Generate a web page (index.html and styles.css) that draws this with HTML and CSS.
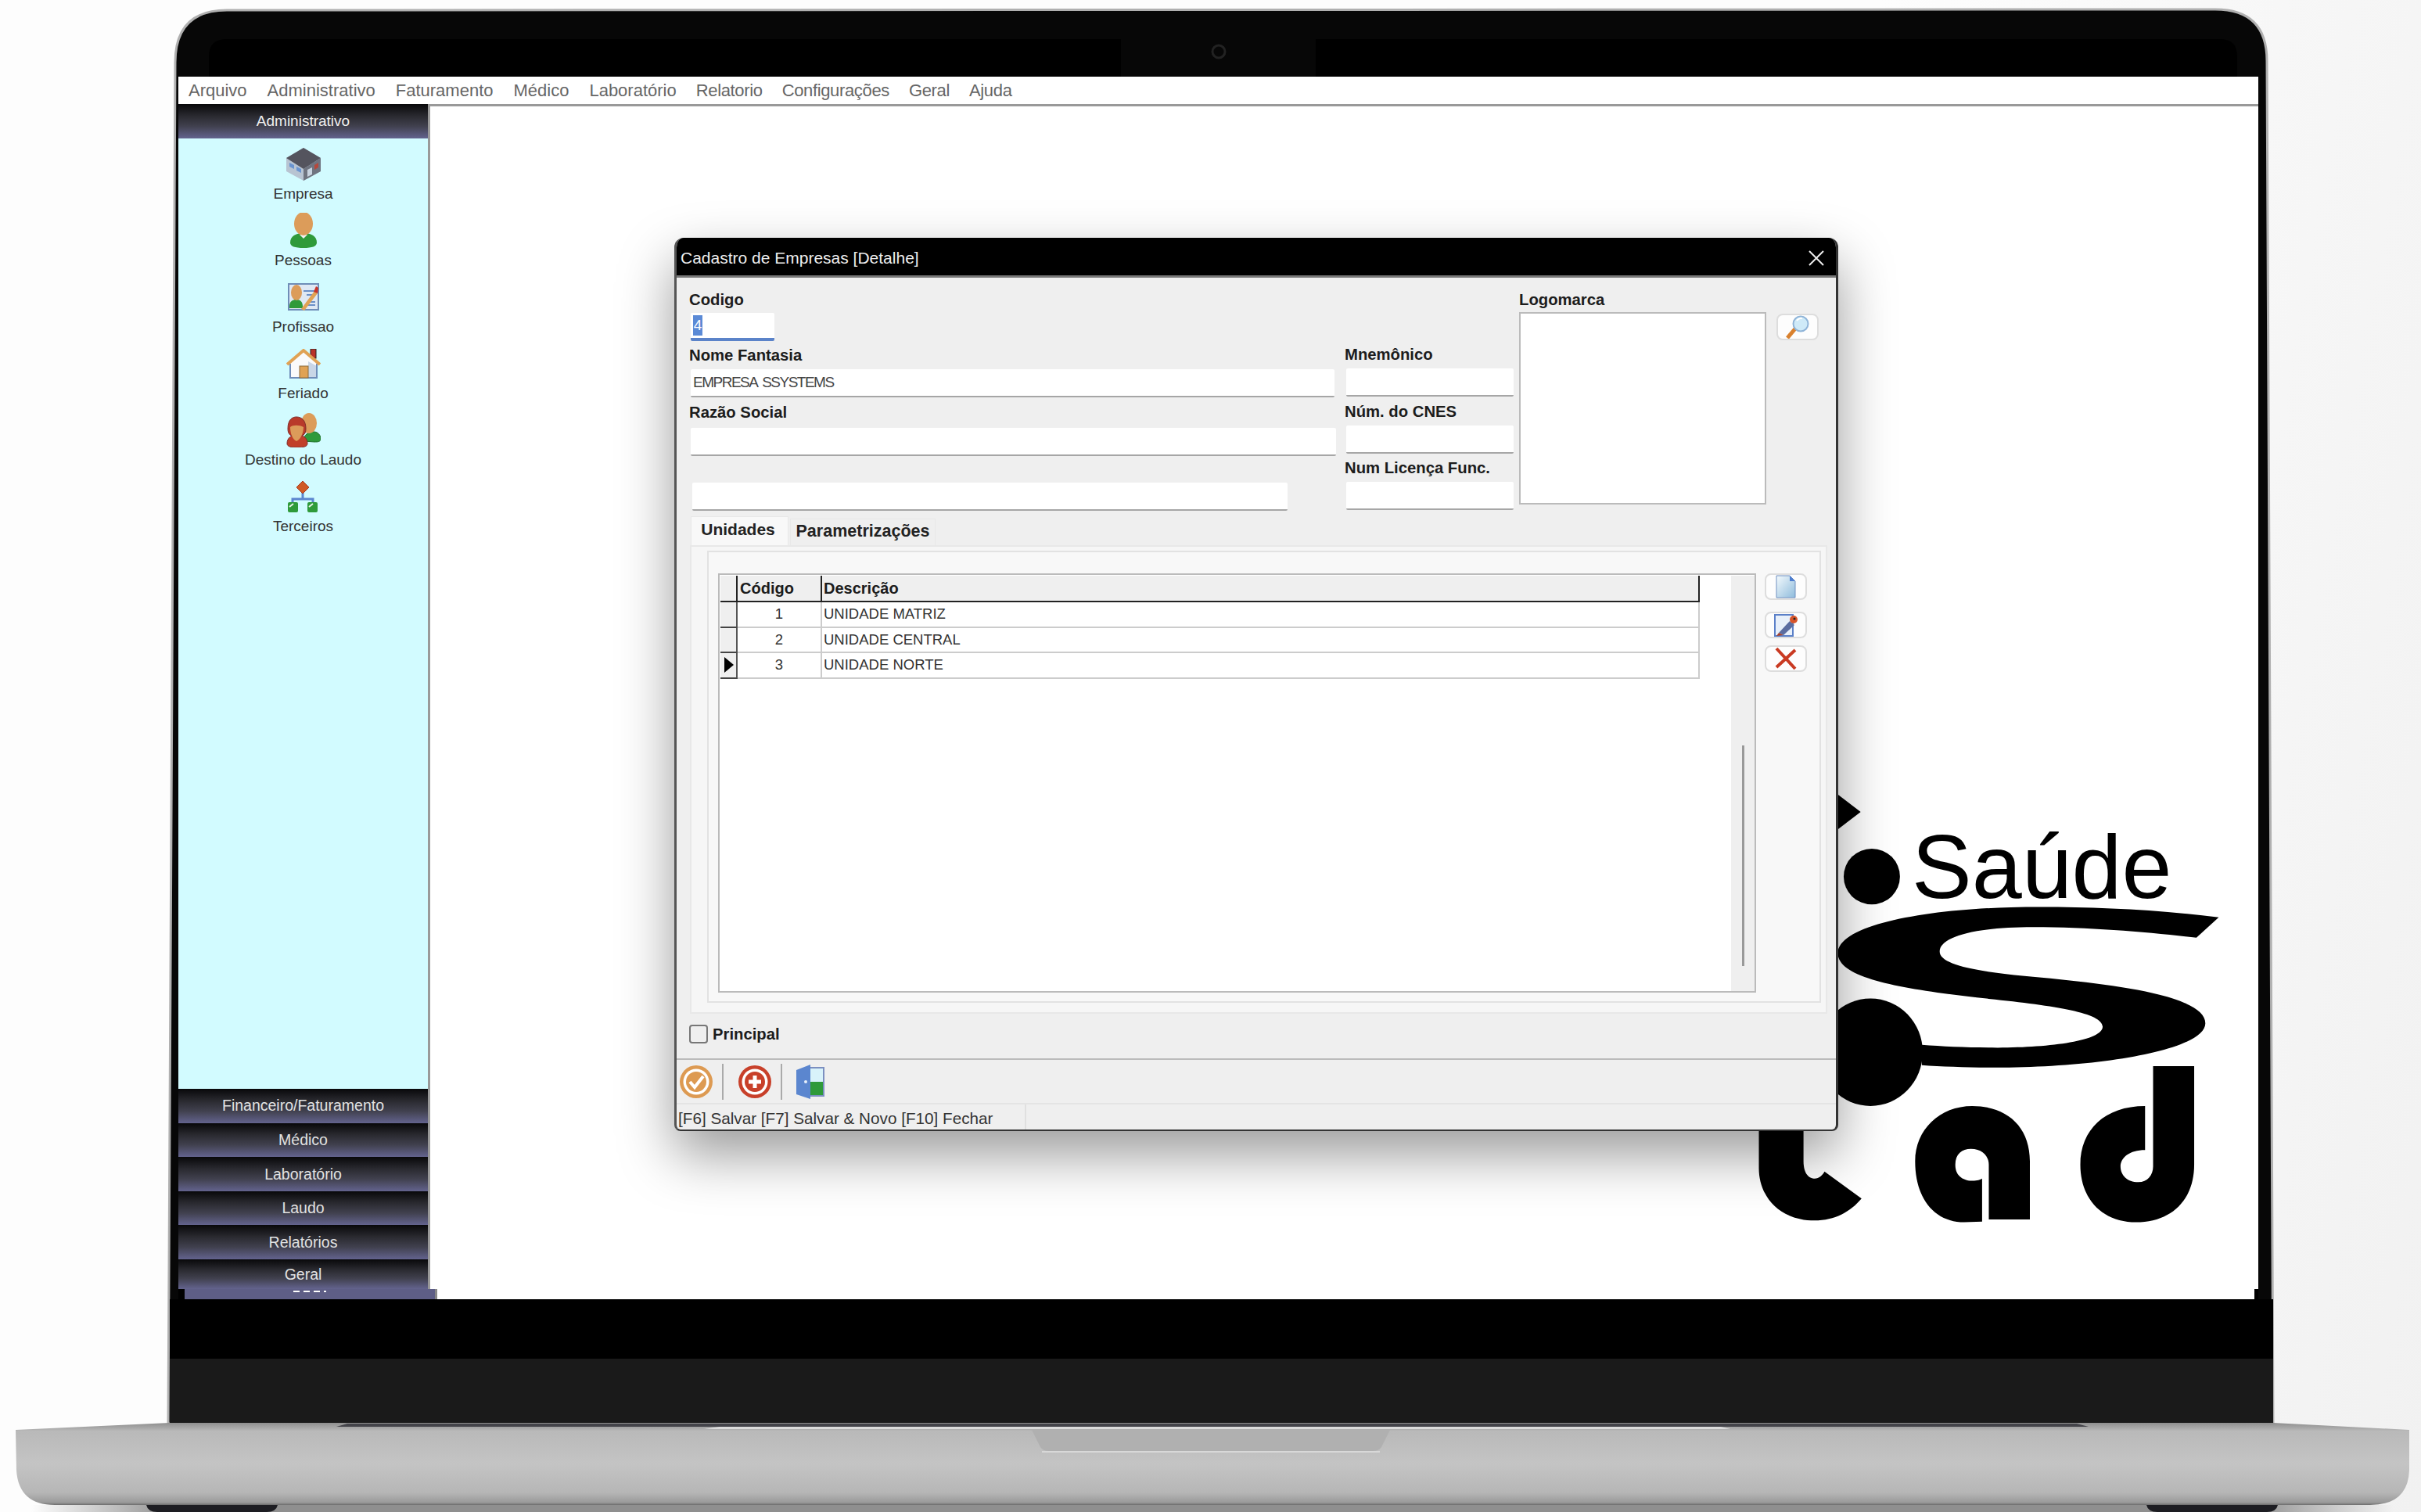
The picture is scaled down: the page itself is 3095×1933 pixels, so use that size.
FILE: index.html
```html
<!DOCTYPE html>
<html lang="pt-BR">
<head>
    <meta charset="UTF-8">
    <title>Cadastro de Empresas</title>
    <link rel="stylesheet" href="styles.css">
</head>
<body>
<div class="stage">

    <!-- corpo do notebook -->
    <svg class="device" width="3095" height="1933" viewBox="0 0 3095 1933">
        <defs>
            <linearGradient id="baseGrad" x1="0" y1="0" x2="0" y2="1">
                <stop offset="0" stop-color="#8e8e8e"/>
                <stop offset="0.1" stop-color="#b9b9b9"/>
                <stop offset="0.5" stop-color="#c4c4c4"/>
                <stop offset="0.85" stop-color="#b6b6b6"/>
                <stop offset="0.97" stop-color="#9a9a9a"/>
                <stop offset="1" stop-color="#6d6d6d"/>
            </linearGradient>
            <linearGradient id="floorGrad" x1="0" y1="0" x2="1" y2="0">
                <stop offset="0" stop-color="#999" stop-opacity="0"/>
                <stop offset="0.06" stop-color="#8f8f8f"/>
                <stop offset="0.94" stop-color="#8f8f8f"/>
                <stop offset="1" stop-color="#999" stop-opacity="0"/>
            </linearGradient>
        </defs>
        <rect x="40" y="1924" width="3020" height="9" fill="url(#floorGrad)"/>
        <path d="M187 1924h168q-2 9-14 9H201q-12 0-14-9zM2744 1924h168q-2 9-14 9h-140q-12 0-14-9z" fill="#1d1d22"/>
        <path d="M215 1820 L224 80 Q224 13 290 13 L2832 12 Q2898 12 2898 78 L2906 1820 Z" fill="#070707" stroke="#b0b0b0" stroke-width="3"/>
        <path d="M267 98 V72 Q267 50 290 50 H2838 Q2860 50 2860 72 V98 Z" fill="#000"/>
        <rect x="1433" y="50" width="249" height="48" fill="#070707"/>
        <circle cx="1558" cy="66" r="8" fill="#070707" stroke="#222" stroke-width="3"/>
        <rect x="217" y="1661" width="2689" height="76" fill="#000"/>
        <rect x="217" y="1737" width="2689" height="83" fill="#1a1a1a"/>
        <path d="M20 1828 L217 1819 H2906 L3080 1828 V1880 Q3078 1924 3030 1924 H70 Q24 1924 21 1880 Z" fill="url(#baseGrad)"/>
        <path d="M444 1820 H2655 L2670 1824 H430 Z" fill="#44444a"/>
        <path d="M920 1824 H2200 L2212 1827 H900 Z" fill="#dcdcdc"/>
        <path d="M1319 1828 H1777 L1766 1850 Q1763 1855 1755 1855 H1341 Q1333 1855 1330 1850 Z" fill="#b0b0b0"/>
        <path d="M1332 1856 H1764" stroke="#d8d8d8" stroke-width="2"/>
    </svg>

    <div class="screen">
        <nav class="menu-bar">
            <span>Arquivo</span>
            <span>Administrativo</span>
            <span>Faturamento</span>
            <span>Médico</span>
            <span>Laboratório</span>
            <span class="menu-tight">Relatorio</span>
            <span class="menu-tight">Configurações</span>
            <span class="menu-tight">Geral</span>
            <span class="menu-tight">Ajuda</span>
        </nav>

        <div class="workspace">
            <aside class="sidebar">
                <div class="side-head">Administrativo</div>
                <div class="side-list">
                    <div class="side-item">
                        <span class="side-icon">
                            <svg width="44" height="42" viewBox="0 0 44 42">
                                <path d="M22 0 L44 13 L44 30 L22 42 L0 30 L0 13 Z" fill="#b8c4d2"/>
                                <path d="M22 0 L44 13 L22 27 L0 13 Z" fill="#54545e"/>
                                <path d="M22 27 L44 13 L44 30 L22 42 Z" fill="#6f7480"/>
                                <path d="M4 19 L10 22 V27 L4 24 Z M13 24 L19 27 V32 L13 29 Z" fill="#6a94d0"/>
                                <path d="M27 28 L33 25 V34 L27 37 Z" fill="#c9d3df"/>
                                <path d="M36 22 L41 19 V25 L36 28 Z" fill="#b5483c"/>
                            </svg>
                        </span>
                        <span class="side-label">Empresa</span>
                    </div>
                    <div class="side-item">
                        <span class="side-icon">
                            <svg width="34" height="45" viewBox="0 0 34 45">
                                <path d="M0 38 C0 30 7 26 17 26 C27 26 34 30 34 38 C34 43 28 45 17 45 C6 45 0 43 0 38 Z" fill="#2f9a3a"/>
                                <path d="M12 28 L17 33 L22 28 Z" fill="#f2f2f2"/>
                                <ellipse cx="17" cy="14" rx="12" ry="15" fill="#dc9c5a"/>
                            </svg>
                        </span>
                        <span class="side-label">Pessoas</span>
                    </div>
                    <div class="side-item">
                        <span class="side-icon">
                            <svg width="40" height="35" viewBox="0 0 40 35">
                                <rect x="1" y="1" width="38" height="33" fill="#dfe8f4" stroke="#6f8db8" stroke-width="2"/>
                                <path d="M20 10h15M24 15h11M27 24h8M24 28h11" stroke="#6b8fc8" stroke-width="2"/>
                                <path d="M2 30 C2 23 6 21 11 21 C16 21 19 24 19 30 V32 H2 Z" fill="#2f9a3a"/>
                                <ellipse cx="11" cy="12" rx="7" ry="10" fill="#dc9c5a"/>
                                <path d="M17 33 L34 10 L38 13 L21 35 Z" fill="#e0a254"/>
                                <path d="M33 11 L36 4 L39 6 L38 13 Z" fill="#c8342a"/>
                            </svg>
                        </span>
                        <span class="side-label">Profissao</span>
                    </div>
                    <div class="side-item">
                        <span class="side-icon">
                            <svg width="44" height="38" viewBox="0 0 44 38">
                                <rect x="31" y="0" width="7" height="12" fill="#b8322a" stroke="#222"/>
                                <path d="M5 17 L22 4 L39 17 V38 H5 Z" fill="#fafafa"/>
                                <path d="M28 16 L39 22 V38 H28 Z" fill="#c9d6e6"/>
                                <path d="M5 38 V19 M39 19 V38 M5 37 H39" stroke="#6f8db8" stroke-width="2" fill="none"/>
                                <path d="M1 20 L22 2 L43 20" stroke="#e0a254" stroke-width="4" fill="none"/>
                                <rect x="17" y="22" width="11" height="15" fill="#e0a254" stroke="#8a6a3a"/>
                            </svg>
                        </span>
                        <span class="side-label">Feriado</span>
                    </div>
                    <div class="side-item">
                        <span class="side-icon">
                            <svg width="44" height="44" viewBox="0 0 44 44">
                                <path d="M22 36 C22 28 28 24 35 24 C41 24 44 29 44 33 C44 37 40 37 36 37 Z" fill="#2f9a3a" stroke="#1f6f2a"/>
                                <ellipse cx="29" cy="13" rx="10" ry="13" fill="#dc9c5a"/>
                                <path d="M2 20 C2 8 8 5 13 5 C20 5 25 10 25 20 C25 28 21 30 13 30 C6 30 2 28 2 20 Z" fill="#b93a2a" stroke="#7e2a2a"/>
                                <path d="M1 39 C1 32 6 28 14 28 C22 28 27 32 27 39 C27 43 22 44 14 44 C6 44 1 43 1 39 Z" fill="#c13f2a" stroke="#7e2a2a"/>
                                <path d="M5 18 C8 15 17 15 22 18 C22 26 18 34 13 36 C8 34 5 26 5 18 Z" fill="#dc9c5a"/>
                            </svg>
                        </span>
                        <span class="side-label">Destino do Laudo</span>
                    </div>
                    <div class="side-item">
                        <span class="side-icon">
                            <svg width="39" height="40" viewBox="0 0 39 40">
                                <path d="M19 22 V14 M6 28 V23 H32 V28" stroke="#5b86cf" stroke-width="3" fill="none"/>
                                <path d="M19 0 L27 8 L19 16 L11 8 Z" fill="#cf5a26" stroke="#a83a20"/>
                                <rect x="0" y="27" width="13" height="13" rx="2" fill="#2f9a3a"/>
                                <rect x="25" y="27" width="13" height="13" rx="2" fill="#2f9a3a"/>
                                <path d="M2 33 L7 29 M27 33 L32 29" stroke="#e8f4e8" stroke-width="2"/>
                            </svg>
                        </span>
                        <span class="side-label">Terceiros</span>
                    </div>
                </div>
                <div class="side-btn">Financeiro/Faturamento</div>
                <div class="side-btn">Médico</div>
                <div class="side-btn">Laboratório</div>
                <div class="side-btn">Laudo</div>
                <div class="side-btn">Relatórios</div>
                <div class="side-btn side-btn-cut">Geral</div>
            </aside>
            <main class="desktop"></main>
        </div>

        <div class="screen-foot">
            <div class="foot-gap"></div>
            <div class="foot-strip"><span class="foot-dots"></span></div>
            <div class="foot-fill"></div>
            <div class="foot-end"></div>
        </div>

        <!-- logomarca no fundo -->
        <svg class="wallpaper" width="895" height="700" viewBox="0 0 1568 1568" preserveAspectRatio="none">
            <path d="M262 80 L313 130 L262 180 Z"/>
            <ellipse cx="338" cy="315" rx="63" ry="80"/>
            <path d="M1115 432 C950 405 780 400 650 403 C450 410 262 455 262 535 C262 610 420 640 600 665 C750 685 855 705 855 745 C855 785 740 805 620 805 C560 805 500 802 450 797 L450 855 C500 860 570 862 630 862 C860 860 1085 810 1085 735 C1085 650 850 620 680 600 C560 585 490 565 490 530 C490 490 560 460 700 460 C830 460 960 475 1065 490 Z"/>
            <ellipse cx="335" cy="818" rx="117" ry="154"/>
            <path d="M85 1000 L185 1000 L185 1130 C185 1170 200 1180 210 1180 C220 1180 228 1170 232 1160 L315 1237 C290 1275 255 1300 210 1300 C130 1300 85 1230 85 1150 Z"/>
            <path d="M600 1297 L692 1297 L692 1130 C692 1030 640 972 563 972 C490 972 435 1040 435 1130 C435 1240 480 1305 545 1305 L585 1303 L585 1180 C575 1190 525 1195 525 1140 C525 1110 540 1095 560 1095 C585 1095 600 1115 600 1140 Z"/>
            <path d="M968 858 L1060 858 L1060 1140 C1060 1240 1010 1305 930 1305 C855 1305 805 1240 805 1140 C805 1040 860 972 950 972 L950 1098 C915 1098 895 1120 895 1145 C895 1170 910 1190 935 1190 C955 1190 968 1170 968 1145 Z"/>
        </svg>
        <div class="wallpaper-text">Saúde</div>

        <!-- janela de cadastro -->
        <section class="dialog">
            <header class="dialog-title">
                <span>Cadastro de Empresas [Detalhe]</span>
                <svg width="20" height="20" viewBox="0 0 20 20"><path d="M1 1 L19 19 M19 1 L1 19" stroke="#eee" stroke-width="2"/></svg>
            </header>
            <div class="dialog-body">
                <div class="form-grid">
                    <div class="form-col">
                        <label class="field-label field-label-code">Codigo</label>
                        <div class="input input-code"><span class="selected">4</span></div>
                        <label class="field-label gap-top">Nome Fantasia</label>
                        <div class="input input-nome">EMPRESA SSYSTEMS</div>
                        <label class="field-label gap-top-lg">Razão Social</label>
                        <div class="input input-razao"></div>
                        <div class="input input-extra"></div>
                    </div>
                    <div class="form-col form-col-mid">
                        <label class="field-label">Mnemônico</label>
                        <div class="input"></div>
                        <label class="field-label gap-top-lg">Núm. do CNES</label>
                        <div class="input"></div>
                        <label class="field-label gap-top">Num Licença Func.</label>
                        <div class="input"></div>
                    </div>
                    <div class="form-col">
                        <label class="field-label field-label-tight">Logomarca</label>
                        <div class="logo-box"></div>
                    </div>
                    <button class="tool-btn lookup-btn">
                        <svg width="32" height="32" viewBox="0 0 32 32">
                            <path d="M3 30 L14 17" stroke="#d9812e" stroke-width="5"/>
                            <circle cx="20" cy="12" r="9.5" fill="#cfeaf8" stroke="#8fb4d8" stroke-width="2"/>
                            <path d="M15 8 Q18 4 22 5" stroke="#fff" stroke-width="2" fill="none"/>
                        </svg>
                    </button>
                </div>

                <div class="tabs">
                    <div class="tab tab-active">Unidades</div>
                    <div class="tab">Parametrizações</div>
                </div>
                <div class="tab-panel">
                    <div class="inner-panel">
                        <div class="grid-box">
                            <div class="grid-table">
                                <div class="grid-row grid-head">
                                    <div class="cell-ind"></div>
                                    <div class="cell-code">Código</div>
                                    <div class="cell-desc">Descrição</div>
                                </div>
                                <div class="grid-row">
                                    <div class="cell-ind"></div>
                                    <div class="cell-code">1</div>
                                    <div class="cell-desc">UNIDADE MATRIZ</div>
                                </div>
                                <div class="grid-row">
                                    <div class="cell-ind"></div>
                                    <div class="cell-code">2</div>
                                    <div class="cell-desc">UNIDADE CENTRAL</div>
                                </div>
                                <div class="grid-row">
                                    <div class="cell-ind"><span class="row-arrow"></span></div>
                                    <div class="cell-code">3</div>
                                    <div class="cell-desc">UNIDADE NORTE</div>
                                </div>
                            </div>
                            <div class="scroll-track"><div class="scroll-thumb"></div></div>
                        </div>
                        <div class="side-tools">
                            <button class="tool-btn">
                                <svg width="26" height="30" viewBox="0 0 26 30">
                                    <defs>
                                        <linearGradient id="docGrad" x1="0" y1="0" x2="1" y2="1">
                                            <stop offset="0" stop-color="#f4fafd"/>
                                            <stop offset="1" stop-color="#8fbcdc"/>
                                        </linearGradient>
                                    </defs>
                                    <path d="M1 1 H18 L25 8 V29 H1 Z" fill="url(#docGrad)" stroke="#6f8fc0"/>
                                    <path d="M18 1 L25 8 H18 Z" fill="#4f7fd0"/>
                                </svg>
                            </button>
                            <button class="tool-btn">
                                <svg width="30" height="30" viewBox="0 0 30 30">
                                    <path d="M1 2 H24 V29 H1 Z" fill="#e8f0fa" stroke="#5b80c8" stroke-width="2"/>
                                    <path d="M6 25 L20 10 L26 15 L12 28 Z" fill="#5b6da0"/>
                                    <path d="M6 25 L3 29 L12 28 Z" fill="#a8402a"/>
                                    <circle cx="25" cy="8" r="5" fill="#d8552a"/>
                                    <circle cx="26" cy="7" r="1.5" fill="#222"/>
                                </svg>
                            </button>
                            <button class="tool-btn">
                                <svg width="30" height="30" viewBox="0 0 30 30">
                                    <path d="M3 2 L27 28 M27 4 L3 26" stroke="#c93a22" stroke-width="4"/>
                                </svg>
                            </button>
                        </div>
                    </div>
                </div>

                <div class="principal-row">
                    <span class="check-box"></span>
                    <span class="principal-label">Principal</span>
                </div>
            </div>

            <div class="toolbar">
                <svg width="44" height="44" viewBox="0 0 44 44">
                    <circle cx="22" cy="22" r="21" fill="#dd9a52"/>
                    <circle cx="22" cy="22" r="16.5" fill="#fff"/>
                    <circle cx="22" cy="22" r="13" fill="#dd9a52"/>
                    <path d="M14 22 L20 29 L31 15" stroke="#fff" stroke-width="4" fill="none"/>
                </svg>
                <span class="tool-sep"></span>
                <svg width="44" height="44" viewBox="0 0 44 44">
                    <circle cx="22" cy="22" r="21" fill="#c8402a"/>
                    <circle cx="22" cy="22" r="16.5" fill="#fff"/>
                    <circle cx="22" cy="22" r="13" fill="#c8402a"/>
                    <path d="M22 14 V30 M14 22 H30" stroke="#fff" stroke-width="5"/>
                </svg>
                <span class="tool-sep"></span>
                <svg width="36" height="44" viewBox="0 0 36 44">
                    <rect x="16" y="4" width="19" height="36" fill="#d8f2fa" stroke="#7c8fc0" stroke-width="2"/>
                    <rect x="17" y="22" width="17" height="17" fill="#2f9a3a"/>
                    <path d="M0 7 L18 0 V44 L0 38 Z" fill="#5b86cf"/>
                    <circle cx="12" cy="22" r="2" fill="#e8f0fa"/>
                </svg>
            </div>
            <footer class="status-bar">
                <div class="status-text">[F6] Salvar [F7] Salvar &amp; Novo [F10] Fechar</div>
            </footer>
        </section>
    </div>
</div>
</body>
</html>
```

FILE: styles.css
```css
/* base */
body {
    margin: 0;
    font-family: "Liberation Sans", Arial, sans-serif;
    background: linear-gradient(100deg, #fdfdfd 70%, #f1f1f1 100%);
}

.stage {
    position: relative;
    width: 3095px;
    height: 1933px;
    overflow: hidden;
}

.device {
    position: absolute;
    top: 0;
    left: 0;
}

/* tela */
.screen {
    position: absolute;
    top: 98px;
    left: 228px;
    width: 2659px;
    height: 1563px;
    background: #fff;
    overflow: hidden;
    display: flex;
    flex-direction: column;
}

.menu-bar {
    height: 35px;
    flex: none;
    display: flex;
    align-items: center;
    gap: 26px;
    padding-left: 13px;
    font-size: 22px;
    color: #666;
}

.menu-tight {
    letter-spacing: -0.35px;
    margin-left: -1px;
}

.workspace {
    flex: 1;
    display: flex;
    min-height: 0;
}

.sidebar {
    width: 319px;
    flex: none;
    border-right: 3px solid #999;
    display: flex;
    flex-direction: column;
}

.desktop {
    flex: 1;
    border-top: 3px solid #999;
}

.side-head,
.side-btn {
    height: 43.6px;
    flex: none;
    display: flex;
    align-items: center;
    justify-content: center;
    font-size: 19.5px;
    color: #e2e2e2;
    background: linear-gradient(#08080a 0%, #2a2a30 35%, #41414f 65%, #63638e 100%);
}

.side-head {
    color: #efefef;
    font-size: 19px;
}

.side-btn-cut {
    height: 38px;
}

.side-list {
    flex: 1;
    background: #d2fbff;
    padding-top: 7px;
}

.side-item {
    display: flex;
    flex-direction: column;
    align-items: center;
    margin-bottom: 9px;
}

.side-icon {
    height: 52px;
    display: flex;
    align-items: center;
    justify-content: center;
}

.side-label {
    font-size: 19px;
    line-height: 24px;
    color: #333;
}

.screen-foot {
    height: 13px;
    flex: none;
    display: flex;
}

.foot-gap {
    width: 8px;
    background: #000;
}

.foot-strip {
    width: 320px;
    border-right: 3px solid #888;
    background: #5e5e86;
    display: flex;
    justify-content: center;
}

.foot-dots {
    width: 42px;
    height: 2px;
    margin-top: 2px;
    background: repeating-linear-gradient(90deg, #fff 0 8px, transparent 8px 13px);
}

.foot-fill {
    flex: 1;
    background: #fff;
}

.foot-end {
    width: 5px;
    background: #000;
}

/* logomarca */
.wallpaper {
    position: absolute;
    top: 882px;
    left: 1972px;
}

.wallpaper-text {
    position: absolute;
    top: 945px;
    left: 2216px;
    font-size: 115px;
    line-height: 130px;
    color: #000;
}

/* janela */
.dialog {
    position: absolute;
    top: 206px;
    left: 634px;
    width: 1488px;
    height: 1142px;
    box-sizing: border-box;
    background: #efefef;
    border-radius: 12px 12px 8px 8px;
    overflow: hidden;
    border-left: 3px solid #555;
    border-right: 3px solid #333;
    border-bottom: 2px solid #333;
    display: flex;
    flex-direction: column;
    box-shadow: 0 30px 70px rgba(0, 0, 0, 0.4);
}

.dialog-title {
    height: 45px;
    flex: none;
    margin: 0 -3px;
    padding: 3px 18px 0 8px;
    background: #000;
    border-bottom: 3px solid #777;
    display: flex;
    align-items: center;
    justify-content: space-between;
    font-size: 21px;
    color: #eee;
}

.dialog-body {
    flex: 1;
    padding: 15px 11px 0 16px;
}

.form-grid {
    display: grid;
    grid-template-columns: 838px 223px 316px 53px;
    align-items: start;
}

.form-col {
    display: flex;
    flex-direction: column;
}

.form-col-mid {
    padding-top: 70px;
}

.field-label {
    height: 26px;
    line-height: 26px;
    margin-bottom: 5px;
    font-size: 20.3px;
    font-weight: bold;
    color: #1c1c1c;
    white-space: nowrap;
}

.field-label-code {
    margin-bottom: 4px;
}

.field-label-tight {
    margin-bottom: 3px;
}

.gap-top {
    margin-top: 5px;
}

.gap-top-lg {
    margin-top: 6px;
}

.input {
    height: 36px;
    box-sizing: border-box;
    margin-left: 2px;
    background: #fff;
    border-bottom: 2px solid #a6a6a6;
    border-radius: 2px;
    padding-left: 3px;
    font-size: 19px;
    line-height: 34px;
    letter-spacing: -1.5px;
    word-spacing: 3px;
    color: #444;
}

.form-col-mid .input {
    width: 214px;
}

.input-code {
    width: 107px;
    border-bottom: 4px solid #5b83c9;
    line-height: 26px;
    padding-top: 3px;
}

.selected {
    display: inline-block;
    width: 12px;
    background: #5b8ad6;
    color: #fff;
    letter-spacing: 0;
    text-align: center;
}

.input-nome {
    width: 823px;
}

.input-razao {
    width: 825px;
    margin-top: 2px;
}

.input-extra {
    width: 761px;
    margin-top: 34px;
    margin-left: 4px;
}

.logo-box {
    height: 246px;
    box-sizing: border-box;
    background: #fff;
    border: 2px solid #bbb;
}

.tool-btn {
    width: 54px;
    height: 34px;
    padding: 0;
    display: flex;
    align-items: center;
    justify-content: center;
    background: #fdfdfd;
    border: 2px solid #ddd;
    border-radius: 8px;
    overflow: hidden;
}

.lookup-btn {
    margin: 31px 0 0 13px;
}

/* abas */
.tabs {
    display: flex;
    align-items: flex-end;
    gap: 2px;
    height: 37px;
    margin: 7px 0 0 2px;
}

.tab {
    height: 34px;
    width: 186px;
    box-sizing: border-box;
    border: 1px solid #e8e8e8;
    border-bottom: none;
    padding-bottom: 2px;
    display: flex;
    align-items: center;
    justify-content: center;
    font-size: 21.5px;
    font-weight: bold;
    color: #222;
}

.tab-active {
    height: 37px;
    width: 125px;
    background: #f8f8f8;
    font-size: 21px;
    padding: 0 4px 4px 0;
}

.tab-panel {
    height: 599px;
    box-sizing: border-box;
    margin-left: 1px;
    padding: 5px 6px 12px 20px;
    background: #f6f6f6;
    border: 2px solid #e8e8e8;
}

.inner-panel {
    height: 100%;
    box-sizing: border-box;
    padding: 27px 16px 11px 12px;
    background: #f8f8f8;
    border: 2px solid #e2e2e2;
    display: flex;
    gap: 11px;
}

.grid-box {
    flex: 1;
    box-sizing: border-box;
    padding: 1px 0 0 1px;
    background: #fff;
    border: 2px solid #bbb;
    display: flex;
    justify-content: space-between;
}

.grid-table {
    width: 1252px;
}

.grid-row {
    display: grid;
    grid-template-columns: 22px 108px 1fr;
    height: 32.5px;
    box-sizing: border-box;
    font-size: 18.5px;
    color: #333;
}

.grid-row > div {
    display: flex;
    align-items: center;
    box-sizing: border-box;
    border-bottom: 2px solid #ccc;
    border-right: 2px solid #ccc;
}

.grid-row .cell-ind {
    background: #efefef;
    border-right: 2px solid #555;
    border-bottom: 2px solid #444;
}

.cell-code {
    justify-content: center;
}

.cell-desc {
    padding-left: 2px;
}

.grid-row.grid-head {
    height: 34px;
    font-size: 20px;
    font-weight: bold;
    color: #1c1c1c;
}

.grid-head > div {
    background: #efefef;
    border-right: 2px solid #222;
    border-bottom: 2px solid #222;
}

.grid-row.grid-head .cell-ind {
    border-right: 2px solid #222;
    border-bottom: 2px solid #222;
}

.grid-head .cell-code {
    justify-content: flex-start;
    padding-left: 3px;
}

.row-arrow {
    width: 0;
    height: 0;
    margin-left: 5px;
    border-left: 12px solid #000;
    border-top: 10px solid transparent;
    border-bottom: 10px solid transparent;
}

.scroll-track {
    width: 30px;
    background: #efefef;
    display: flex;
    justify-content: center;
}

.scroll-thumb {
    width: 3px;
    height: 282px;
    margin-top: 217px;
    background: #999;
}

.side-tools {
    display: flex;
    flex-direction: column;
}

.side-tools .tool-btn:nth-child(2) {
    margin-top: 15px;
}

.side-tools .tool-btn:nth-child(3) {
    margin-top: 9px;
}

.principal-row {
    display: flex;
    align-items: center;
    gap: 6px;
    height: 24px;
    margin-top: 14px;
}

.check-box {
    width: 24px;
    height: 24px;
    box-sizing: border-box;
    border: 2px solid #777;
    border-radius: 4px;
}

.principal-label {
    font-size: 20.3px;
    font-weight: bold;
    color: #1c1c1c;
}

/* barra de ferramentas */
.toolbar {
    height: 59px;
    flex: none;
    box-sizing: border-box;
    border-top: 2px solid #bbb;
    border-bottom: 2px solid #e4e4e4;
    padding-left: 3px;
    display: flex;
    align-items: center;
    gap: 11px;
}

.tool-sep {
    width: 2px;
    height: 46px;
    background: #aaa;
}

.toolbar .tool-sep + svg {
    margin-left: 7px;
}

.status-bar {
    height: 32px;
    flex: none;
    display: flex;
}

.status-text {
    width: 443px;
    padding-left: 2px;
    font-size: 20.7px;
    line-height: 36px;
    color: #333;
    border-right: 2px solid #e0e0e0;
    white-space: nowrap;
}
```
